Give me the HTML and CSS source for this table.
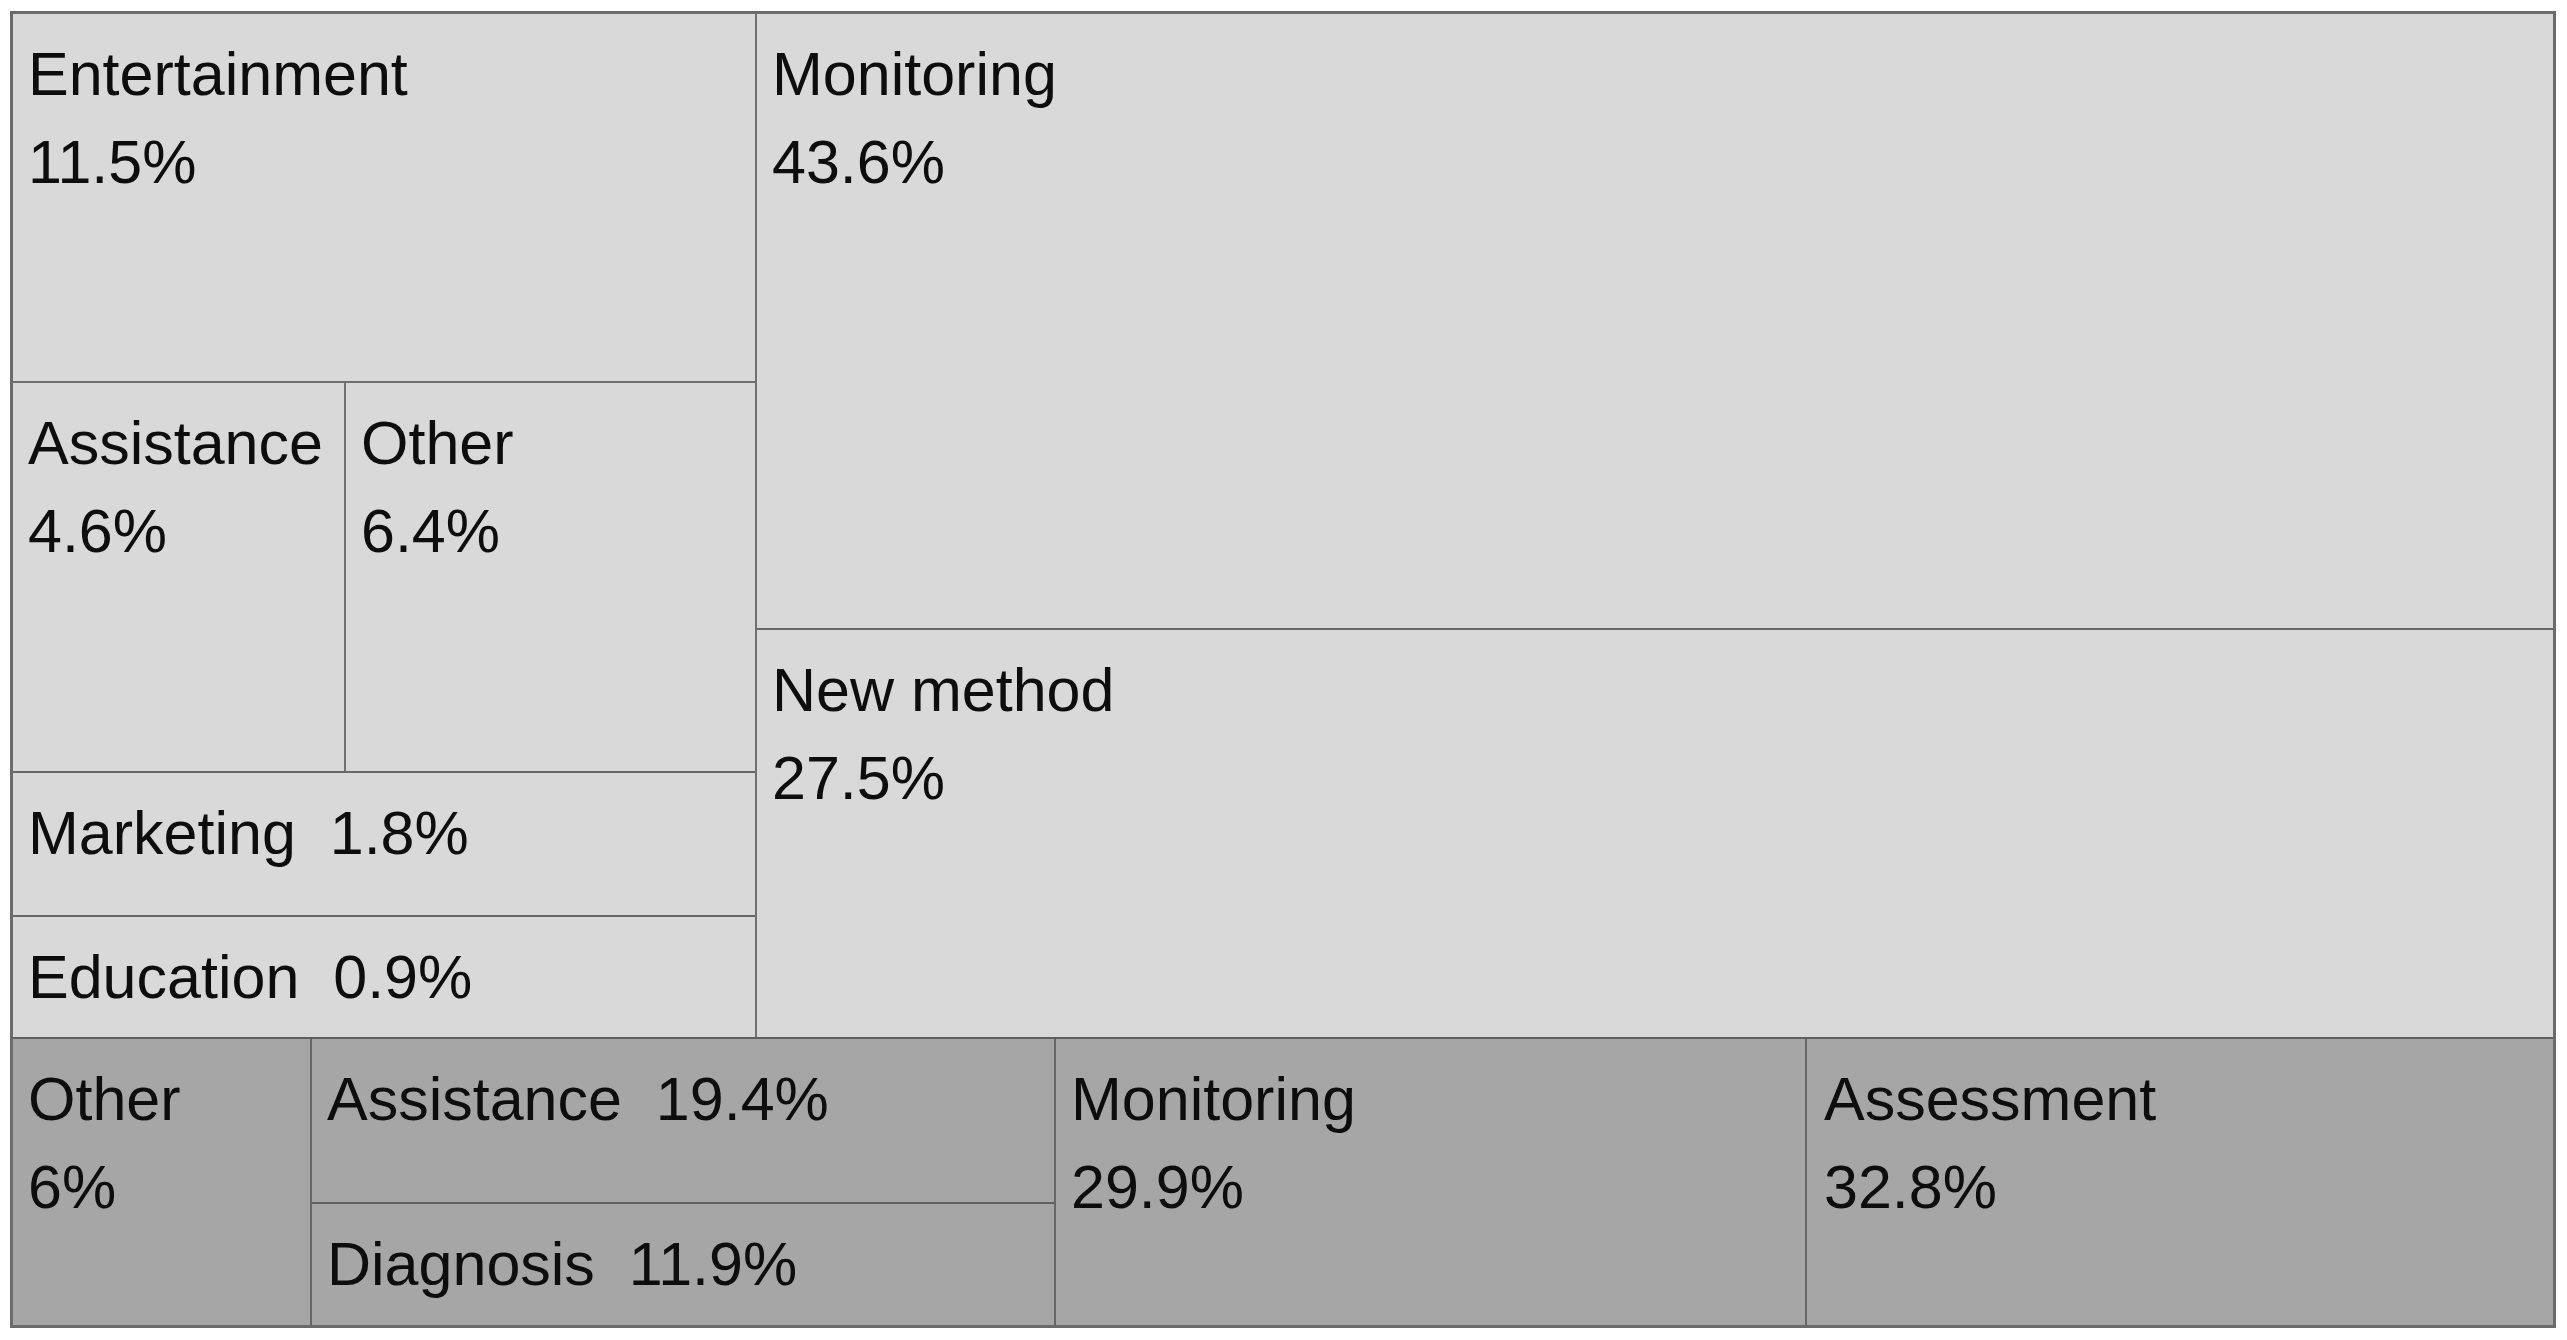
FILE: index.html
```html
<!DOCTYPE html>
<html lang="en">
<head>
<meta charset="utf-8">
<title>Treemap</title>
<link rel="stylesheet" href="styles.css">
</head>
<body>
<div class="treemap">
  <div class="top">
    <div class="left-col">
      <div class="cell ent"><span class="lbl">Entertainment</span><span class="lbl">11.5%</span></div>
      <div class="pair">
        <div class="cell assist"><span class="lbl">Assistance</span><span class="lbl">4.6%</span></div>
        <div class="cell other-top"><span class="lbl">Other</span><span class="lbl">6.4%</span></div>
      </div>
      <div class="cell marketing"><span class="lbl">Marketing  1.8%</span></div>
      <div class="cell education"><span class="lbl">Education  0.9%</span></div>
    </div>
    <div class="right-col">
      <div class="cell monitoring-top"><span class="lbl">Monitoring</span><span class="lbl">43.6%</span></div>
      <div class="cell newmethod"><span class="lbl">New method</span><span class="lbl">27.5%</span></div>
    </div>
  </div>
  <div class="bottom">
    <div class="cell dark other-bottom"><span class="lbl">Other</span><span class="lbl">6%</span></div>
    <div class="stack">
      <div class="cell dark assist-bottom"><span class="lbl">Assistance  19.4%</span></div>
      <div class="cell dark diagnosis"><span class="lbl">Diagnosis  11.9%</span></div>
    </div>
    <div class="cell dark monitoring-bottom"><span class="lbl">Monitoring</span><span class="lbl">29.9%</span></div>
    <div class="cell dark assessment"><span class="lbl">Assessment</span><span class="lbl">32.8%</span></div>
  </div>
</div>
</body>
</html>
```

FILE: styles.css
```css
* {
  box-sizing: border-box;
}

html, body {
  margin: 0;
  padding: 0;
  background: #ffffff;
}

body {
  padding: 11px 0 0 10px;
  font-family: "Liberation Sans", Arial, sans-serif;
  font-size: 61px;
  line-height: 88px;
  color: #0d0d0d;
}

.treemap {
  width: 2546px;
  height: 1317px;
  border: 3px solid #6b6b6b;
  display: flex;
  flex-direction: column;
  background: #d9d9d9;
}

.top {
  height: 1025px;
  display: flex;
  border-bottom: 2px solid #5f5f5f;
}

.left-col {
  width: 744px;
  display: flex;
  flex-direction: column;
  border-right: 2px solid #707070;
}

.right-col {
  flex: 1;
  display: flex;
  flex-direction: column;
}

.cell {
  display: flex;
  flex-direction: column;
  align-items: flex-start;
  padding: 16px 0 0 15px;
  background: #d9d9d9;
  overflow: hidden;
}

.lbl {
  display: block;
  white-space: pre;
}

.ent {
  height: 369px;
  border-bottom: 2px solid #707070;
}

.pair {
  height: 390px;
  display: flex;
  border-bottom: 2px solid #686868;
}

.assist {
  width: 333px;
  border-right: 2px solid #707070;
}

.other-top {
  flex: 1;
}

.marketing {
  height: 144px;
  border-bottom: 2px solid #686868;
}

.education {
  flex: 1;
}

.monitoring-top {
  height: 616px;
  border-bottom: 2px solid #686868;
}

.newmethod {
  flex: 1;
}

.bottom {
  flex: 1;
  display: flex;
  background: #a6a6a6;
}

.dark {
  background: #a6a6a6;
}

.other-bottom {
  width: 299px;
  border-right: 2px solid #666666;
}

.stack {
  width: 744px;
  display: flex;
  flex-direction: column;
  border-right: 2px solid #666666;
}

.assist-bottom {
  height: 165px;
  border-bottom: 2px solid #5f5f5f;
}

.diagnosis {
  flex: 1;
}

.monitoring-bottom {
  width: 751px;
  border-right: 2px solid #666666;
}

.assessment {
  flex: 1;
  padding-left: 17px;
}
```
